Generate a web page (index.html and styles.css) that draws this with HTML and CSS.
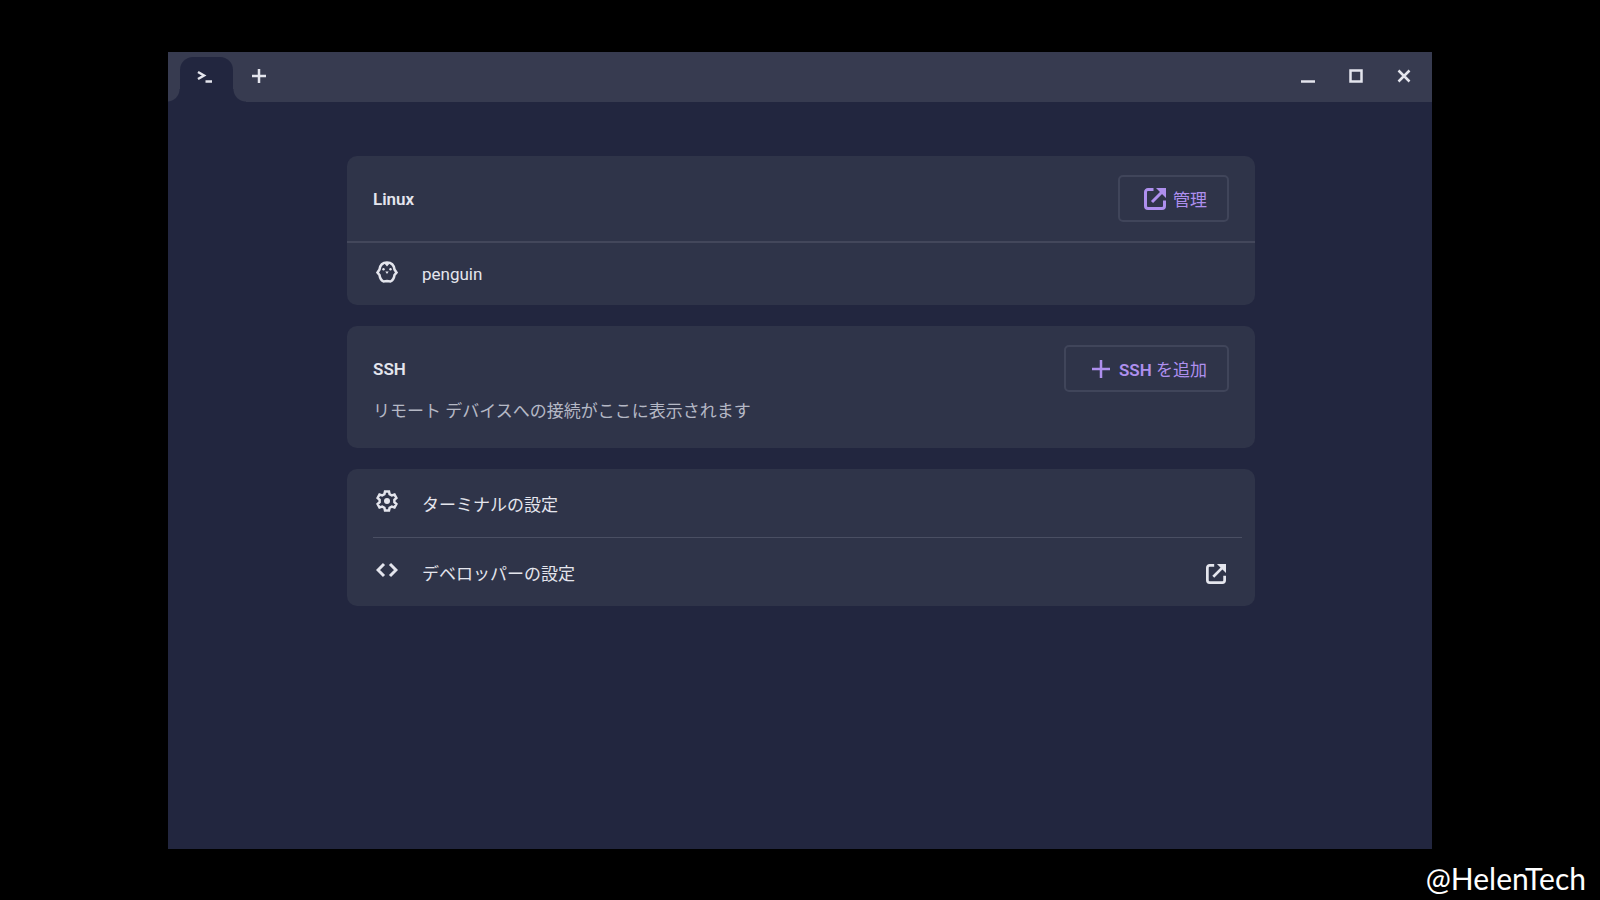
FILE: index.html
```html
<!DOCTYPE html>
<html lang="ja">
<head>
    <meta charset="utf-8">
    <title>Terminal</title>
    <link rel="stylesheet" href="styles.css">
</head>
<body>
    <div class="window">
        <header class="titlebar">
            <button class="tab" aria-label="Terminal">
                <svg width="16" height="14" viewBox="0 0 16 14"><path d="M1 2l6 3.500-6 3.500M8.500 11.500h6.500" /></svg>
            </button>
            <button class="icon-button new-tab" aria-label="New tab">
                <svg width="16" height="16" viewBox="0 0 16 16"><path d="M8 1v14M1 8h14" /></svg>
            </button>
            <div class="controls">
                <button class="icon-button" aria-label="Minimize">
                    <svg width="16" height="16" viewBox="0 0 16 16"><path d="M1 13.500h14" /></svg>
                </button>
                <button class="icon-button" aria-label="Maximize">
                    <svg width="16" height="16" viewBox="0 0 16 16"><path d="M2.500 2.500h11v11h-11z" /></svg>
                </button>
                <button class="icon-button" aria-label="Close">
                    <svg width="16" height="16" viewBox="0 0 16 16"><path d="M2.500 2.500l11 11M13.500 2.500l-11 11" /></svg>
                </button>
            </div>
        </header>
        <main class="content">
            <section class="card">
                <div class="card-header">
                    <h2>Linux</h2>
                    <button class="button">
                        <svg width="22" height="22" viewBox="0 0 22 22">
                            <path d="M9.500 1.500H4A2.500 2.500 0 0 0 1.500 4v14A2.500 2.500 0 0 0 4 20.500h14a2.500 2.500 0 0 0 2.500-2.500v-5.500M8 14L18 4" />
                            <path class="fill" d="M12 0h10v10z" />
                        </svg>
                        <span>管理</span>
                    </button>
                </div>
                <a class="row row-linux" href="#">
                    <svg class="row-icon penguin-icon" width="22" height="22" viewBox="0 0 22 22">
                        <path d="M11 1.500C6.500 1.500 4 4.500 3.500 8.500L1.500 11.500 3.500 14C4 17.500 5.500 19.500 7.500 20.500L11 20l3.500.5c2-1 3.500-3 4-6.500l2-2.500L18.500 8.500C18 4.500 15.500 1.500 11 1.500z" />
                        <path class="fill" d="M8 2h6L11 5.500zM9.300 10.500h3.400L11 13z" />
                        <circle class="fill" cx="7.500" cy="8.300" r="1.200" />
                        <circle class="fill" cx="14.500" cy="8.300" r="1.200" />
                    </svg>
                    <span>penguin</span>
                </a>
            </section>
            <section class="card">
                <div class="card-header">
                    <h2>SSH</h2>
                    <button class="button">
                        <svg class="plus-icon" width="22" height="22" viewBox="0 0 22 22"><path d="M11 2v18M2 11h18" /></svg>
                        <span><b>SSH</b> を追加</span>
                    </button>
                </div>
                <p class="description">リモート デバイスへの接続がここに表示されます</p>
            </section>
            <section class="card">
                <a class="row" href="#">
                    <svg class="row-icon gear-icon" width="22" height="22" viewBox="0 0 22 22">
                        <path d="M9 1.500h4l.6 2.700 2.200 1.300 2.700-.9 1.900 3.400-2 1.900v2.200l2 1.900-1.900 3.400-2.700-.9-2.200 1.300-.6 2.700H9l-.6-2.700-2.200-1.300-2.700.9L1.600 14l2-1.900V9.900l-2-1.900 1.900-3.400 2.700.9 2.200-1.300z" />
                        <circle class="fill" cx="11" cy="11" r="3" />
                    </svg>
                    <span>ターミナルの設定</span>
                </a>
                <hr>
                <a class="row" href="#">
                    <svg class="row-icon" width="22" height="22" viewBox="0 0 22 22"><path d="M8 5l-6 6 6 6M14 5l6 6-6 6" /></svg>
                    <span>デベロッパーの設定</span>
                    <svg class="row-end" width="20" height="20" viewBox="0 0 22 22">
                        <path d="M9 1.500H4A2.500 2.500 0 0 0 1.500 4v14A2.500 2.500 0 0 0 4 20.500h14a2.500 2.500 0 0 0 2.500-2.500v-5M8 14L18 4" />
                        <path class="fill" d="M12 0h10v10z" />
                    </svg>
                </a>
            </section>
        </main>
    </div>
    <footer class="watermark">@HelenTech</footer>
</body>
</html>
```
FILE: styles.css
```css
* {
    box-sizing: border-box;
}
body {
    margin: 0;
    padding-top: 52px;
    background: #000;
    color: #e4e5ed;
    font-family: Roboto, "Noto Sans CJK JP", sans-serif;
    font-size: 17px;
    line-height: 24px;
}
button {
    font: inherit;
    color: inherit;
    background: none;
    border: none;
    padding: 0;
    cursor: pointer;
}
svg {
    display: block;
    flex: none;
    fill: none;
    stroke: currentColor;
    stroke-width: 3;
}
svg .fill {
    fill: currentColor;
    stroke: none;
}
.window {
    width: 79%;
    min-height: calc(100vh - 103px);
    margin: 0 auto;
    background: #22263f;
}

/* title bar */
.titlebar {
    display: flex;
    align-items: center;
    height: 50px;
    padding: 0 16px 0 12px;
    overflow: hidden;
    background: #373b50;
}
.tab {
    position: relative;
    display: flex;
    align-items: center;
    justify-content: center;
    align-self: flex-end;
    width: 53px;
    height: 45px;
    padding: 0 3px 5px 0;
    border-radius: 13px 13px 0 0;
    background: #22263f;
}
.tab svg {
    stroke-width: 2.5;
}
.tab::before,
.tab::after {
    content: "";
    position: absolute;
    bottom: 0;
    width: 13px;
    height: 13px;
}
.tab::before {
    right: 100%;
    background: radial-gradient(circle at 0 0, #373b50 12px, #22263f 13px);
}
.tab::after {
    left: 100%;
    background: radial-gradient(circle at 100% 0, #373b50 12px, #22263f 13px);
}
.icon-button {
    padding: 4px;
}
.icon-button svg {
    stroke-width: 2.5;
}
.new-tab {
    margin-left: 14px;
    margin-bottom: 2px;
}
.controls {
    display: flex;
    gap: 24px;
    margin-left: auto;
    margin-bottom: 2px;
}

/* cards */
.content {
    display: flex;
    flex-direction: column;
    gap: 21px;
    padding: 54px 177px 53px 179px;
}
.card {
    border-radius: 10px;
    background: #2f3449;
}
.card-header {
    display: flex;
    align-items: center;
    justify-content: space-between;
    height: 85px;
    padding: 0 26px;
}
h2 {
    margin: 0;
    font-size: 17px;
    font-weight: 600;
}
.button {
    display: flex;
    align-items: center;
    gap: 7px;
    height: 47px;
    padding: 0 20px 0 24px;
    border: 2px solid #40455a;
    border-radius: 5px;
    color: #ae8fee;
}
.button span {
    padding-top: 2px;
}
.button b {
    font-weight: 600;
}
.plus-icon {
    stroke-width: 2.5;
}
.row {
    display: flex;
    align-items: center;
    height: 68px;
    padding: 3px 29px 0;
    color: inherit;
    text-decoration: none;
}
.row-linux {
    height: 64px;
    padding-top: 0;
    border-top: 2px solid #43475b;
}
.row-icon {
    margin-right: 24px;
    margin-bottom: 8px;
}
.row-linux .row-icon {
    margin-bottom: 5px;
}
.penguin-icon,
.gear-icon {
    stroke-width: 2.5;
}
.row-end {
    margin-left: auto;
}
hr {
    height: 1px;
    margin: 0 13px 0 26px;
    border: none;
    background: #4a4f63;
}
.description {
    margin: -12px 0 0;
    padding: 0 26px 25px;
    color: #b5b8c5;
}

.watermark {
    padding: 9px 14px 0 0;
    color: #fff;
    font-family: Lato, sans-serif;
    font-size: 30px;
    line-height: 40px;
    text-align: right;
}
```
